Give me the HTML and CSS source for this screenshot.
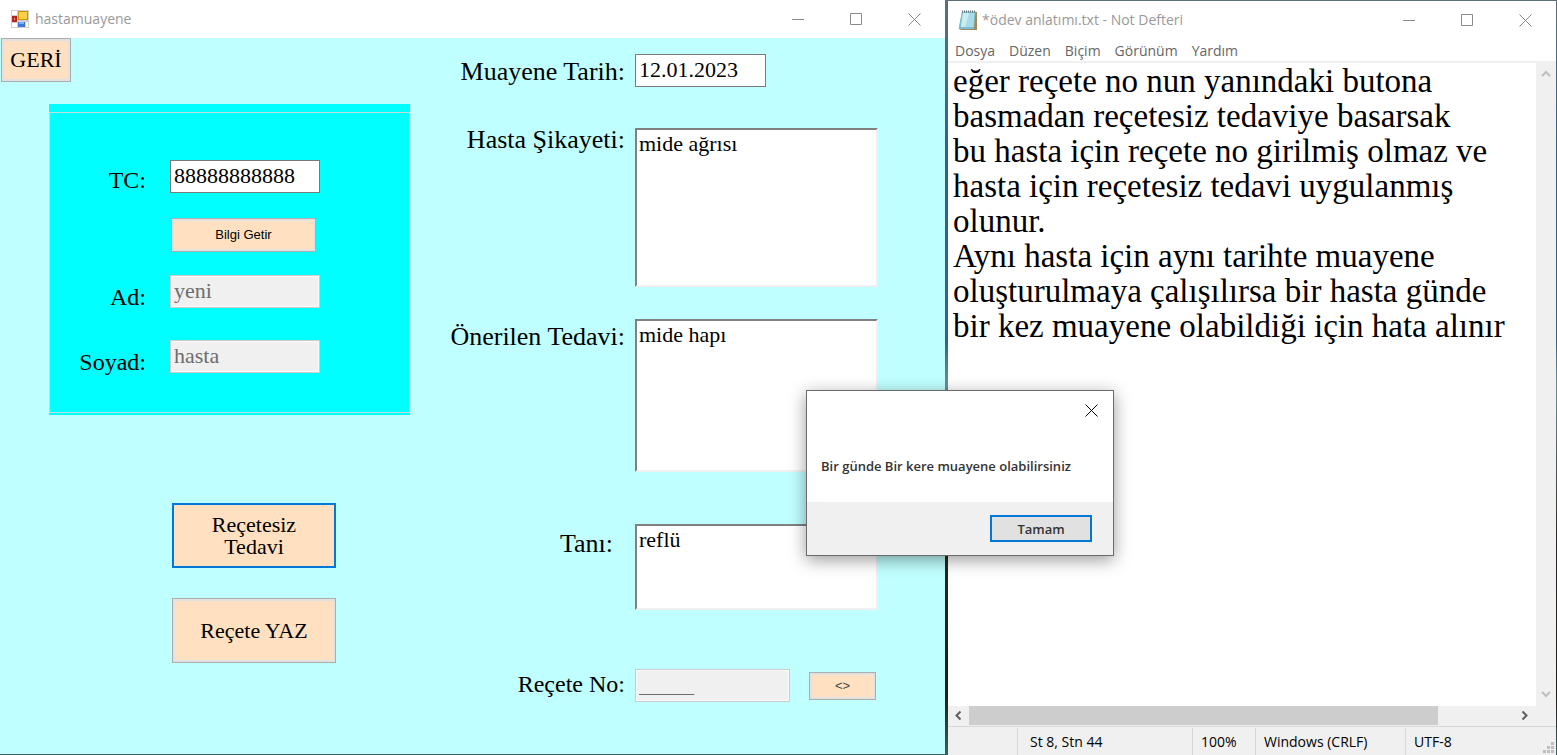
FILE: index.html
```html
<!DOCTYPE html>
<html lang="tr">
<head>
<meta charset="utf-8">
<title>hastamuayene</title>
<link rel="stylesheet" href="styles.css">
</head>
<body>
<svg class="defs" aria-hidden="true">
  <symbol id="win-min" viewBox="0 0 13 13"><path d="M0 6.5H12"/></symbol>
  <symbol id="win-max" viewBox="0 0 13 13"><path d="M.5 .5H11.5V11.5H.5Z"/></symbol>
  <symbol id="win-close" viewBox="0 0 13 13"><path d="M.5 .5L12.5 12.5M12.5 .5L.5 12.5"/></symbol>
  <symbol id="chevron" viewBox="0 0 10 7"><path d="M1 6L5 2L9 6"/></symbol>
</svg>
<main class="desktop">
  <section class="window exam">
    <header class="titlebar">
      <svg class="app-icon" viewBox="0 0 18 18">
        <rect width="18" height="18" fill="#cfcfcf"/>
        <rect x="1" y="1" width="5" height="4" fill="#fff"/><rect x="1" y="13" width="5" height="4" fill="#fff"/><rect x="15" y="12" width="2" height="5" fill="#fff"/>
        <rect x="1" y="6" width="5" height="6" fill="#b32420"/><rect x="3" y="8" width="1" height="2" fill="#f0a090"/>
        <rect x="7" y="1" width="10" height="9" fill="#c89508"/><rect x="8" y="2" width="8" height="7" fill="#fbd045"/>
        <rect x="7" y="12" width="7" height="5" fill="#3f74d8"/><rect x="8" y="12" width="5" height="2" fill="#86b0f5"/>
      </svg>
      <h1 class="title">hastamuayene</h1>
      <div class="win-buttons">
        <button aria-label="Simge durumuna küçült"><svg><use href="#win-min"/></svg></button>
        <button aria-label="Ekranı kapla"><svg><use href="#win-max"/></svg></button>
        <button aria-label="Kapat"><svg><use href="#win-close"/></svg></button>
      </div>
    </header>
    <form class="form">
      <div class="patient">
        <button type="button" class="btn back">GERİ</button>
        <div class="group">
          <div class="group-frame">
            <label for="tc">TC:</label><input id="tc" class="field" value="88888888888">
            <button type="button" class="btn small fetch">Bilgi Getir</button>
            <label for="ad">Ad:</label><input id="ad" class="field" value="yeni" disabled>
            <label for="soyad">Soyad:</label><input id="soyad" class="field" value="hasta" disabled>
          </div>
        </div>
        <div class="actions">
          <button type="button" class="btn action focused">Reçetesiz<br>Tedavi</button>
          <button type="button" class="btn action">Reçete YAZ</button>
        </div>
      </div>
      <div class="details">
        <label for="tarih">Muayene Tarih:</label><input id="tarih" class="field date" value="12.01.2023">
        <label for="sikayet" class="top">Hasta Şikayeti:</label><textarea id="sikayet" class="field area">mide ağrısı</textarea>
        <label for="tedavi">Önerilen Tedavi:</label><textarea id="tedavi" class="field area">mide hapı</textarea>
        <label for="tani" class="inset">Tanı:</label><textarea id="tani" class="field area">reflü</textarea>
        <label for="no" class="compact">Reçete No:</label>
        <div class="number"><input id="no" class="field" value="_____" disabled><button type="button" class="btn small swap">&lt;&gt;</button></div>
      </div>
    </form>
  </section>

  <section class="window notepad">
    <header class="titlebar">
      <svg class="note-icon" viewBox="0 0 20 21">
        <path d="M4 2H19V20H3L1 19Z" fill="#a08a58"/>
        <path d="M4 1.500H17.500L16 19H.5Z" fill="#79bfcf"/>
        <path d="M5 3H16.500L15.500 17H3Z" fill="#a9dce7"/>
        <path d="M5 3H11L7 17H3Z" fill="#c9edf3"/>
        <path d="M4 1.500H17.500" stroke="#66777c" stroke-width="2" stroke-dasharray="1 1"/>
      </svg>
      <h2 class="title">*ödev anlatımı.txt - Not Defteri</h2>
      <div class="win-buttons">
        <button aria-label="Simge durumuna küçült"><svg><use href="#win-min"/></svg></button>
        <button aria-label="Ekranı kapla"><svg><use href="#win-max"/></svg></button>
        <button aria-label="Kapat"><svg><use href="#win-close"/></svg></button>
      </div>
    </header>
    <nav class="menu">
      <button>Dosya</button><button>Düzen</button><button>Biçim</button><button>Görünüm</button><button>Yardım</button>
    </nav>
    <div class="editor">
      <textarea class="note" aria-label="Metin" spellcheck="false">eğer reçete no nun yanındaki butona
basmadan reçetesiz tedaviye basarsak
bu hasta için reçete no girilmiş olmaz ve
hasta için reçetesiz tedavi uygulanmış
olunur.
Aynı hasta için aynı tarihte muayene
oluşturulmaya çalışılırsa bir hasta günde
bir kez muayene olabildiği için hata alınır</textarea>
      <div class="vscroll"><svg><use href="#chevron"/></svg><svg class="down"><use href="#chevron"/></svg></div>
      <div class="hscroll"><svg class="left"><use href="#chevron"/></svg><div class="track"><div class="thumb"></div></div><svg class="right"><use href="#chevron"/></svg></div>
    </div>
    <footer class="status">
      <span></span><span>St 8, Stn 44</span><span>100%</span><span>Windows (CRLF)</span><span>UTF-8</span>
      <svg class="grip" viewBox="0 0 11 11"><path d="M8 0h3v3H8zM4 4h3v3H4zM8 4h3v3H8zM0 8h3v3H0zM4 8h3v3H4zM8 8h3v3H8z"/></svg>
    </footer>
  </section>

  <div class="dialog" role="alertdialog" aria-labelledby="msg">
    <div class="dialog-head"><button class="dialog-close" aria-label="Kapat"><svg><use href="#win-close"/></svg></button></div>
    <p id="msg" class="dialog-text">Bir günde Bir kere muayene olabilirsiniz</p>
    <div class="dialog-foot"><button class="ok">Tamam</button></div>
  </div>
</main>
</body>
</html>
```
FILE: styles.css
```css
* { box-sizing: border-box; }
body { margin: 0; font-family: "Open Sans", sans-serif; font-size: 14px; color: #000; }
button { font: inherit; color: inherit; border: 0; padding: 0; background: none; }
svg { display: block; }
.defs { position: absolute; width: 0; height: 0; }
.desktop {
  position: relative;
  display: grid;
  grid-template-columns: 945fr 608fr;
  column-gap: 3px;
  min-height: 100vh;
  padding-right: 1px;
  background: linear-gradient(#5c7079, #2f6385 20%, #2d6488 45%, #6d8f92 51%, #2b2620 72%, #1e1b18 92%, #38615f);
}
.window { display: flex; flex-direction: column; min-width: 0; background: #fff; }
.exam { margin-bottom: 1px; }
.notepad { margin-top: 1px; }
.titlebar { display: flex; align-items: center; height: 38px; padding: 0 2px 0 11px; color: #999; }
.title { flex: 1; margin: 0; font-size: 14px; font-weight: 400; line-height: 20px; }
.app-icon { width: 18px; height: 18px; margin-right: 6px; }
.note-icon { width: 20px; height: 21px; margin-right: 4px; }
.notepad .titlebar { padding-left: 10px; }
.win-buttons { display: flex; }
.win-buttons button { display: grid; place-items: center; width: 58px; height: 38px; }
.win-buttons svg, .dialog-close svg { width: 13px; height: 13px; fill: none; stroke: #8a8a8a; }

/* Examination form */
.form {
  flex: 1;
  display: grid;
  grid-template-columns: 435fr 510fr;
  background: #c0ffff;
  font-family: Georgia, "Liberation Serif", serif;
  font-size: 24px;
  line-height: 28px;
}
.btn { border: 1px solid #adadad; background: #ffe0c0; box-shadow: inset 0 0 0 2px #e1e1e1; font-size: 22px; line-height: 22px; text-align: center; }
.btn.small { font-family: "Liberation Sans", sans-serif; font-size: 13px; }
.btn.focused { border: 2px solid #0078d7; box-shadow: none; }
.back { display: block; width: 70px; height: 44px; margin-left: 1px; }
.group { width: 361px; margin: 22px 0 0 49px; padding: 8px 0 2px; background: #0ff; }
.group-frame {
  display: grid;
  grid-template-columns: 97px 150px;
  grid-template-rows: 33px 32px 33px 40px;
  column-gap: 23px;
  row-gap: 25px;
  padding: 47px 0 39px;
  border: 1px solid #c4dcdc;
}
.group-frame label { padding: 6px 1px 0 0; text-align: right; }
.group-frame label[for="ad"] { padding-top: 8px; }
.group-frame #soyad { align-self: end; }
.group-frame label[for="soyad"] { padding-top: 15px; }
.fetch { grid-column: 2; width: 145px; height: 34px; margin-left: 1px; }
.field { width: 150px; height: 33px; padding: 0 3px 2px; border: 1px solid #7a7a7a; border-radius: 0; background: #fff; font: inherit; font-size: 22px; color: #000; }
.field:disabled { border-color: #ccc; background: #f0f0f0; box-shadow: inset 0 0 0 1px #fafafa; color: #6d6d6d; }
.actions { display: grid; gap: 30px; justify-content: start; margin: 88px 0 0 172px; }
.action { width: 164px; height: 65px; }
.details {
  display: grid;
  grid-template-columns: 190px 243px;
  grid-template-rows: 74px 191px 205px 145px 33px;
  column-gap: 10px;
  align-content: start;
  padding-top: 16px;
}
.details label { padding-top: 4px; text-align: right; font-size: 26px; white-space: nowrap; }
.details label.top { padding-top: 0; line-height: 24px; }
.details label.inset { padding: 6px 12px 0 0; }
.details label.compact { padding-top: 1px; font-size: 24px; }
.date { width: 131px; }
.area { display: block; width: 243px; height: 159px; padding: 2px 2px; border: 2px solid; border-color: #808080 #f0f0f0 #f0f0f0 #808080; resize: none; overflow: hidden; line-height: 24px; }
#tedavi { height: 153px; }
#tani { height: 86px; }
.number { display: flex; align-items: center; gap: 19px; }
#no { width: 155px; }
.btn.swap { width: 67px; height: 28px; color: #444; }

/* Notepad */
.menu { display: flex; gap: 14px; height: 24px; padding-left: 7px; border-bottom: 2px solid #f0f0f0; color: #666; }
.menu button { line-height: 24px; }
.editor { flex: 1; display: grid; grid-template: 1fr 20px / 1fr 20px; }
.note {
  border: 0; padding: 1px 5px 0; resize: none; overflow: hidden; outline: 0; background: #fff; color: #000;
  font-family: Georgia, "Liberation Serif", serif; font-size: 33px; line-height: 35px; white-space: pre;
}
.vscroll { grid-row: 1 / 3; grid-column: 2; display: flex; flex-direction: column; justify-content: space-between; align-items: center; padding: 7px 0 28px; background: #f0f0f0; }
.vscroll svg, .hscroll svg { width: 10px; height: 7px; fill: none; stroke: #bfbfbf; stroke-width: 2; }
.vscroll .down { transform: rotate(180deg); }
.hscroll { display: flex; align-items: center; gap: 6px; padding: 0 6px 1px 5px; background: #f0f0f0; }
.hscroll svg { stroke: #606060; }
.hscroll .left { transform: rotate(-90deg); }
.hscroll .right { transform: rotate(90deg); }
.track { flex: 1; height: 19px; }
.thumb { width: 86%; height: 19px; background: #cdcdcd; }
.status { position: relative; display: grid; grid-template-columns: 69px 175px 63px 150px 1fr; align-items: end; height: 29px; border-top: 1px solid #d7d7d7; background: #f0f0f0; }
.status span { height: 27px; padding-left: 8px; border-left: 1px solid #d7d7d7; line-height: 27px; }
.status span:first-child { border: 0; }
.status span:nth-child(2) { padding-left: 12px; }
.grip { position: absolute; right: 2px; bottom: 2px; width: 11px; height: 11px; fill: #bfbfbf; }

/* Message box */
.dialog { position: absolute; left: 806px; top: 390px; width: 308px; border: 1px solid #6b6b6b; background: #fff; box-shadow: 0 4px 16px rgba(0, 0, 0, .4); font-size: 13px; font-weight: 600; color: #333; }
.dialog-head { display: flex; justify-content: flex-end; padding: 13px 15px 0 0; }
.dialog-close svg { stroke: #000; }
.dialog-text { margin: 0; padding: 39px 14px 26px; line-height: 20px; white-space: nowrap; }
.dialog-foot { display: flex; justify-content: flex-end; padding: 13px 21px 13px; background: #f0f0f0; }
.ok { width: 102px; height: 27px; border: 2px solid #0078d7; background: #e1e1e1; }
```
